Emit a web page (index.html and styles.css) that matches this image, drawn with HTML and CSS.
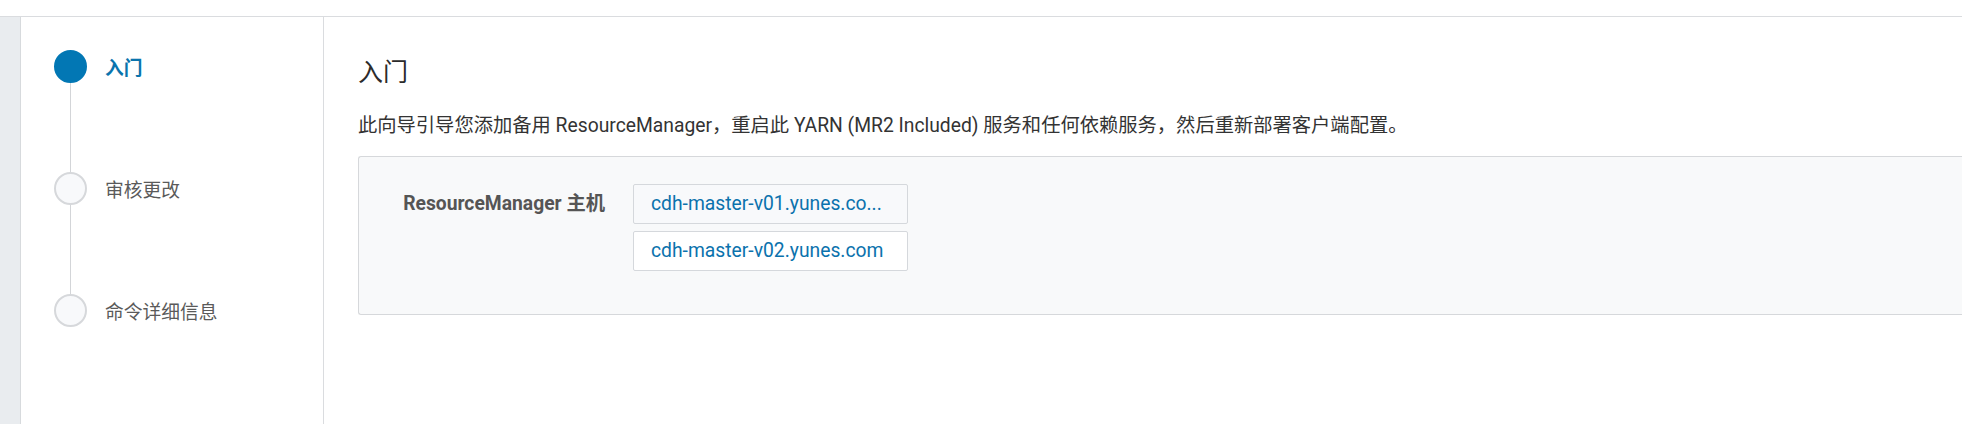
FILE: index.html
```html
<!DOCTYPE html>
<html lang="zh-CN">
<head>
    <meta charset="UTF-8">
    <title>添加 ResourceManager</title>
    <link rel="stylesheet" href="styles.css">
</head>
<body>
    <div class="topbar"></div>

    <div class="layout">
        <div class="rail"></div>

        <aside class="steps">
            <div class="step active">
                <span class="step-dot"></span>
                <span class="step-label">入门</span>
            </div>
            <div class="step-line"></div>
            <div class="step">
                <span class="step-dot"></span>
                <span class="step-label">审核更改</span>
            </div>
            <div class="step-line"></div>
            <div class="step">
                <span class="step-dot"></span>
                <span class="step-label">命令详细信息</span>
            </div>
        </aside>

        <main class="content">
            <h1>入门</h1>
            <p class="intro">此向导引导您添加备用 ResourceManager，重启此 YARN (MR2 Included) 服务和任何依赖服务，然后重新部署客户端配置。</p>

            <div class="panel">
                <div class="field">
                    <label class="field-label">ResourceManager 主机</label>
                    <div class="hosts">
                        <div class="host muted">cdh-master-v01.yunes.co...</div>
                        <div class="host">cdh-master-v02.yunes.com</div>
                    </div>
                </div>
            </div>
        </main>
    </div>
</body>
</html>
```

FILE: styles.css
```css
* {
    margin: 0;
    padding: 0;
    box-sizing: border-box;
}

body {
    font-family: Roboto, "Noto Sans CJK SC", sans-serif;
    font-size: 19.3px;
    color: #333;
    background: white;
    overflow: hidden;
}

.topbar {
    height: 17px;
    border-bottom: 1px solid #dadcdf;
}

.layout {
    display: flex;
    min-height: calc(100vh - 17px);
}

.rail {
    width: 21px;
    flex-shrink: 0;
    background: #e9ecef;
    border-right: 1px solid #d7dadd;
}

/* steps */
.steps {
    width: 303px;
    flex-shrink: 0;
    border-right: 1px solid #dadcdf;
    padding: 33px 0 0 33px;
    font-size: 18.75px;
}

.step {
    display: flex;
    align-items: center;
    gap: 18px;
}

.step-dot {
    width: 33px;
    height: 33px;
    border-radius: 50%;
    border: 2px solid #d6d8db;
    background: #f8f9fb;
    flex-shrink: 0;
}

.step-label {
    color: #5a5a5a;
}

.step.active .step-dot {
    border-color: #0277b4;
    background: #0277b4;
}

.step.active .step-label {
    color: #0a74ad;
    font-weight: 700;
}

.step-line {
    width: 1px;
    height: 89px;
    margin-left: 16px;
    background: #d3d5d8;
}

/* content */
.content {
    flex: 1;
    padding: 41px 0 0 34px;
}

.content h1 {
    font-size: 25px;
    font-weight: 400;
    line-height: 30px;
    color: #2b2b2b;
    margin-bottom: 25px;
}

.intro {
    line-height: 26px;
    margin-bottom: 17px;
}

.panel {
    background: #f8f9fa;
    border: 1px solid #d6d8db;
    border-right: none;
    border-radius: 3px 0 0 3px;
    padding: 27px 0 43px 0;
}

.field {
    display: flex;
    gap: 28px;
}

.field-label {
    width: 246px;
    text-align: right;
    font-weight: 700;
    color: #555;
    line-height: 40px;
}

.hosts {
    display: flex;
    flex-direction: column;
    gap: 7px;
}

.host {
    width: 275px;
    height: 40px;
    line-height: 38px;
    padding: 0 17px;
    border: 1px solid #d5d8dc;
    border-radius: 2px;
    background: white;
    color: #0b72ad;
    white-space: nowrap;
}

.host.muted {
    background: #f8f9fb;
}
```
